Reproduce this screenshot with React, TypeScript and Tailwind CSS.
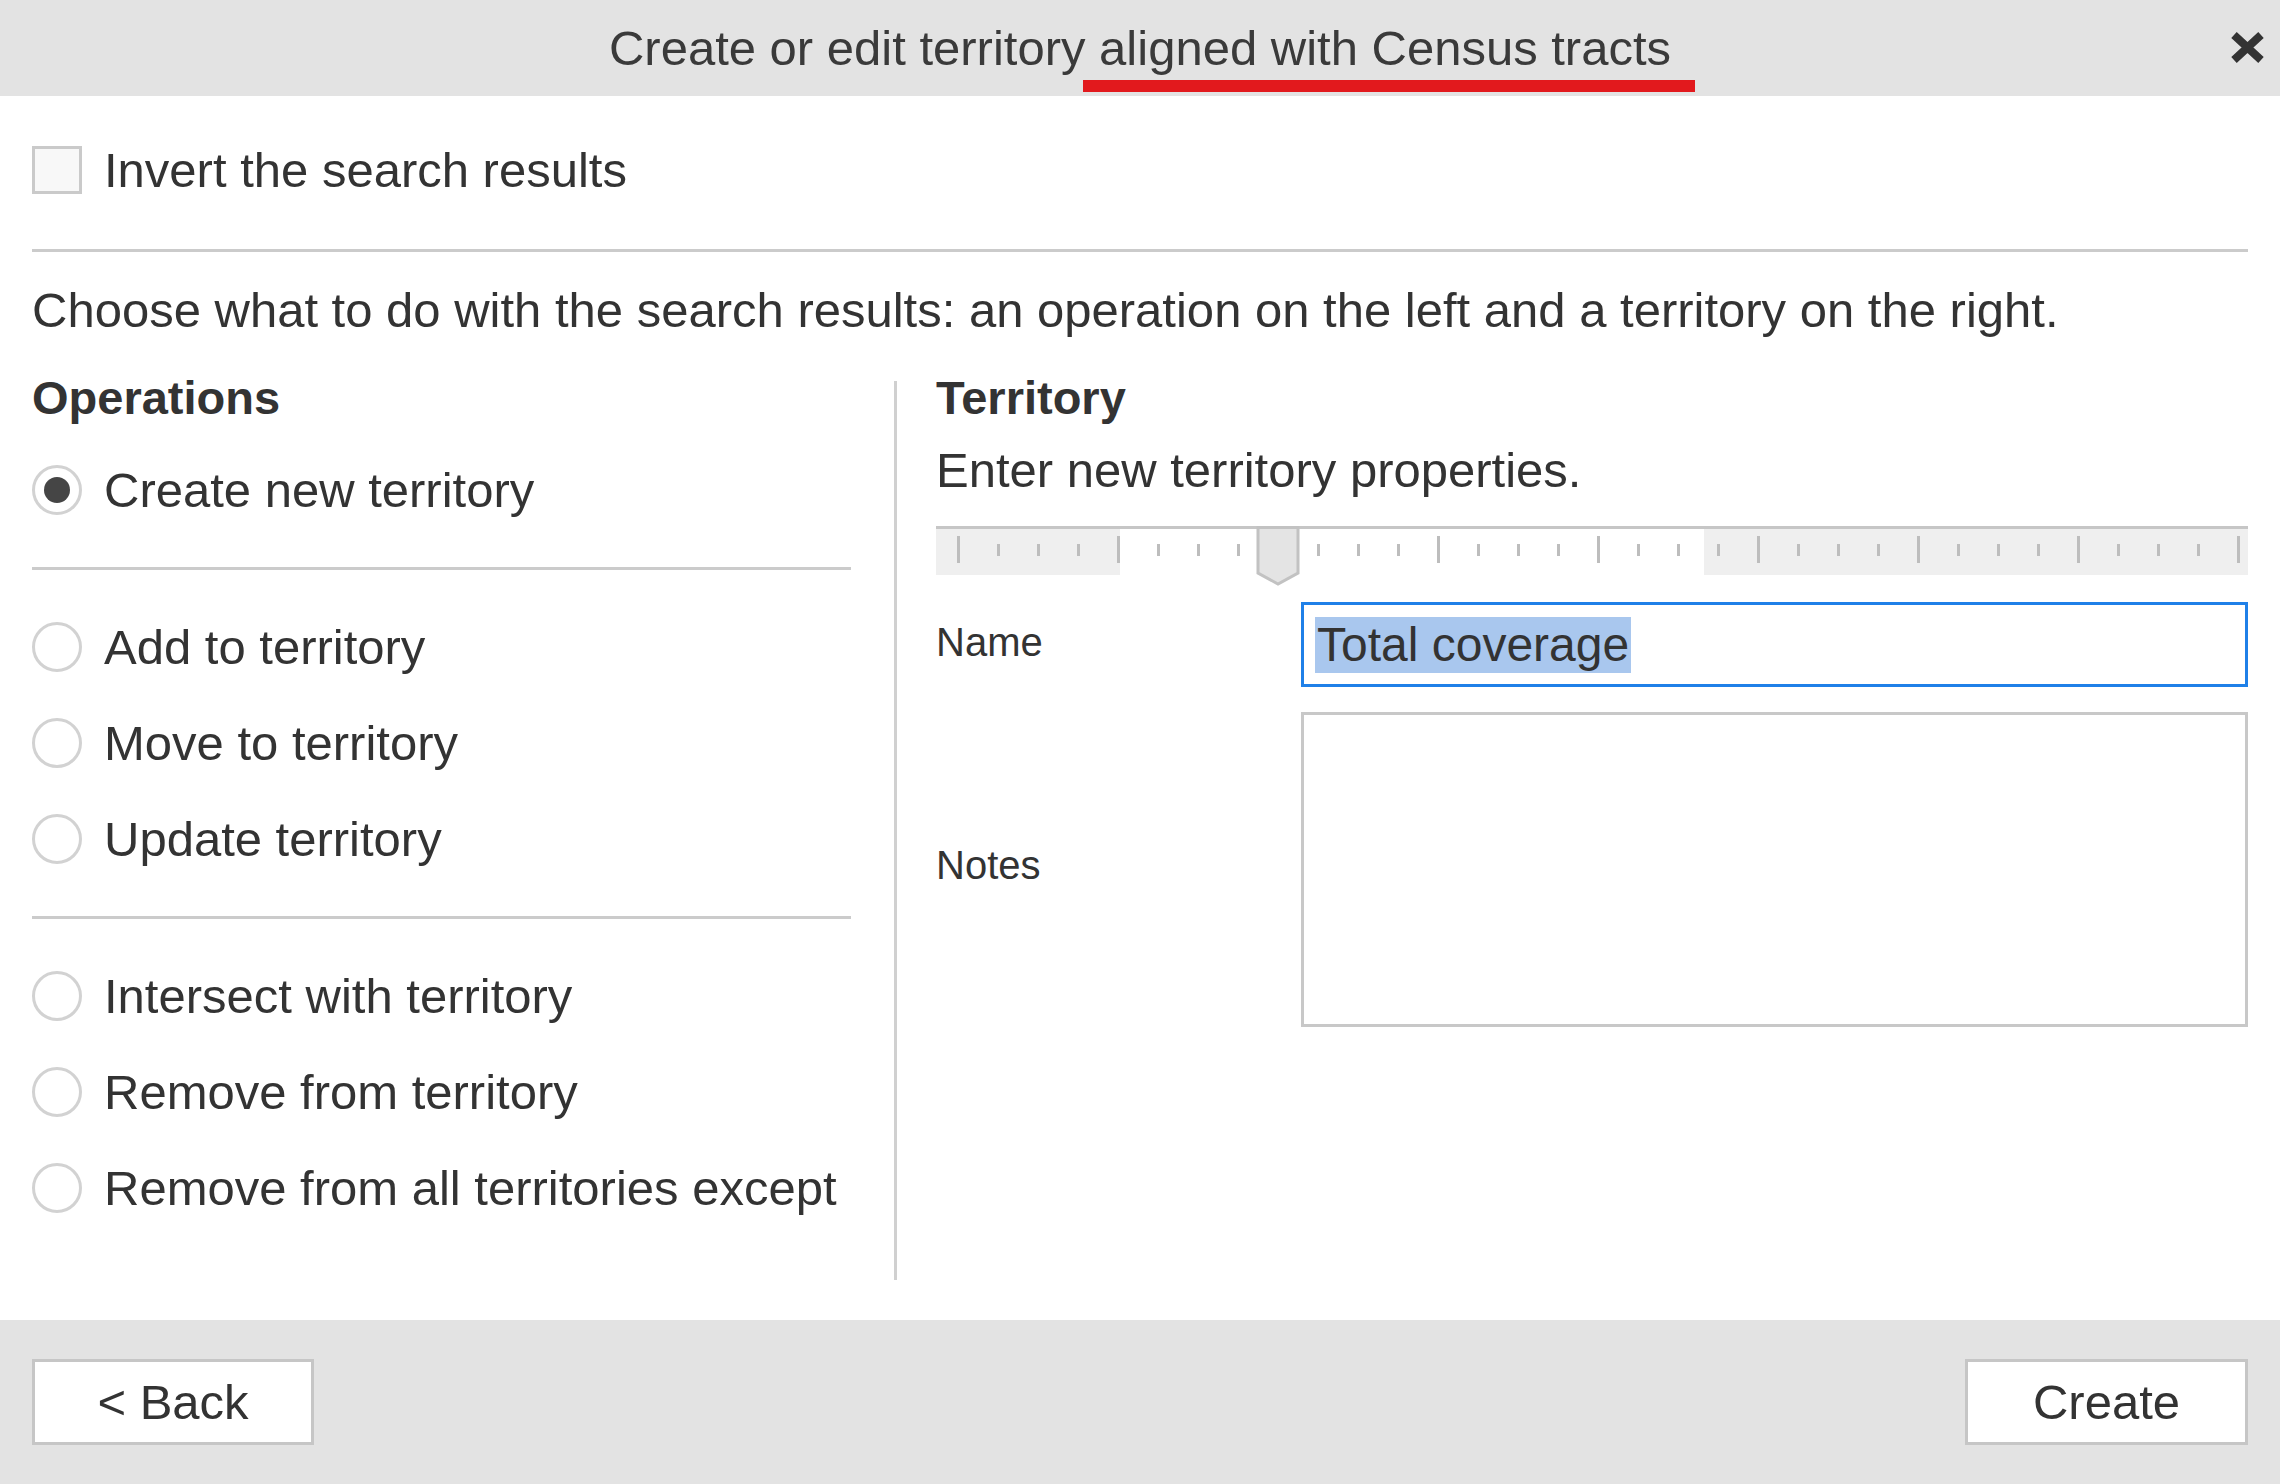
import { useState } from "react";

const operations = [
  ["Add to territory", "Move to territory", "Update territory"],
  ["Intersect with territory", "Remove from territory", "Remove from all territories except"],
];

function Radio({ checked }: { checked?: boolean }) {
  return (
    <span className="w-[50px] h-[50px] shrink-0 rounded-full border-[3px] border-[#d2d2d2] bg-white flex items-center justify-center">
      {checked && <span className="w-[26px] h-[26px] rounded-full bg-[#454545]" />}
    </span>
  );
}

function RadioRow({ label, checked, onClick }: { label: string; checked?: boolean; onClick: () => void }) {
  return (
    <div className="h-[96px] flex items-center gap-[22px] cursor-pointer" onClick={onClick}>
      <Radio checked={checked} />
      <span>{label}</span>
    </div>
  );
}

function Ruler() {
  // ticks every 40px, a long one every 4th
  const ticks = Array.from({ length: 33 }, (_, i) => i);
  return (
    <svg width="1312" height="62" viewBox="0 0 1312 62" className="block">
      <rect x="0" y="3" width="184" height="46" fill="#efefef" />
      <rect x="768" y="3" width="544" height="46" fill="#efefef" />
      <rect x="0" y="0" width="1312" height="3" fill="#c6c6c6" />
      {ticks.map((i) => {
        const x = 22 + i * 40;
        const major = i % 4 === 0;
        return (
          <rect
            key={i}
            x={x - 1}
            y={major ? 10 : 18}
            width="3"
            height={major ? 27 : 12}
            fill="#bdbdbd"
          />
        );
      })}
      <path d="M322 1.5 H362 V47 L342 58 L322 47 Z" fill="#e4e4e4" stroke="#c2c2c2" strokeWidth="3" />
    </svg>
  );
}

export default function App() {
  const [op, setOp] = useState("Create new territory");
  const [invert, setInvert] = useState(false);

  return (
    <div
      className="w-[2280px] h-[1484px] flex flex-col bg-white text-[#333] text-[49px] leading-[56px]"
      style={{ fontFamily: '"Liberation Sans", Arial, sans-serif' }}
    >
      <div className="relative h-[96px] shrink-0 bg-[#e3e3e3] flex items-center justify-center text-[#3a3a3a]">
        <span className="text-[49px]">Create or edit territory aligned with Census tracts</span>
        <span className="absolute left-[1083px] top-[80px] w-[612px] h-[12px] bg-[#e2191d]" />
        <button className="absolute right-[15px] top-[32px]">
          <svg width="35" height="31" viewBox="0 0 35 31" className="block">
            <path d="M4 3 L31 28 M31 3 L4 28" stroke="#333" strokeWidth="8" strokeLinecap="butt" />
          </svg>
        </button>
      </div>

      <div className="flex-1 flex flex-col px-[32px] pt-[46px]">
        <label className="h-[56px] flex items-center gap-[22px] cursor-pointer" onClick={() => setInvert(!invert)}>
          <span className="w-[50px] h-[48px] border-[3px] border-[#cacaca] bg-[#f8f8f8] flex items-center justify-center text-[36px]">
            {invert ? "✓" : ""}
          </span>
          <span>Invert the search results</span>
        </label>

        <div className="mt-[51px] h-[3px] bg-[#cbcbcb]" />

        <p className="mt-[30px] h-[56px]">
          Choose what to do with the search results: an operation on the left and a territory on the right.
        </p>

        <div className="mt-[32px] flex">
          <div className="w-[819px] flex flex-col">
            <h3 className="h-[56px] font-bold text-[47px]">Operations</h3>
            <div className="mt-[16px]">
              <RadioRow label="Create new territory" checked={op === "Create new territory"} onClick={() => setOp("Create new territory")} />
            </div>
            {operations.map((group, gi) => (
              <div key={gi}>
                <div className="my-[29px] h-[3px] bg-[#cbcbcb]" />
                {group.map((label) => (
                  <RadioRow key={label} label={label} checked={op === label} onClick={() => setOp(label)} />
                ))}
              </div>
            ))}
          </div>

          <div className="ml-[43px] mt-[11px] w-[3px] h-[899px] bg-[#d0d0d0]" />

          <div className="flex-1 ml-[39px] flex flex-col">
            <h3 className="h-[56px] font-bold text-[47px]">Territory</h3>
            <p className="mt-[16px] h-[56px]">Enter new territory properties.</p>
            <div className="mt-[28px] h-[50px]">
              <Ruler />
            </div>
            <div className="mt-[26px] flex items-center">
              <span className="w-[365px] text-[40px] pb-[5px]">Name</span>
              <div className="flex-1 h-[85px] border-[3px] border-[#1f80e8] bg-white flex items-center pl-[11px]">
                <span className="bg-[#a9c7ee] px-[2px] leading-[56px] text-[48px]">Total coverage</span>
              </div>
            </div>
            <div className="mt-[25px] flex items-center">
              <span className="w-[365px] text-[40px] pb-[9px]">Notes</span>
              <div className="flex-1 h-[315px] border-[3px] border-[#c8c8c8] bg-white" />
            </div>
          </div>
        </div>
      </div>

      <div className="h-[164px] shrink-0 bg-[#e3e3e3] px-[32px] flex items-center justify-between">
        <button className="w-[282px] h-[86px] bg-white border-[3px] border-[#c6c6c6] text-[#333]">&lt; Back</button>
        <button className="w-[283px] h-[86px] bg-white border-[3px] border-[#c6c6c6] text-[#333]">Create</button>
      </div>
    </div>
  );
}
